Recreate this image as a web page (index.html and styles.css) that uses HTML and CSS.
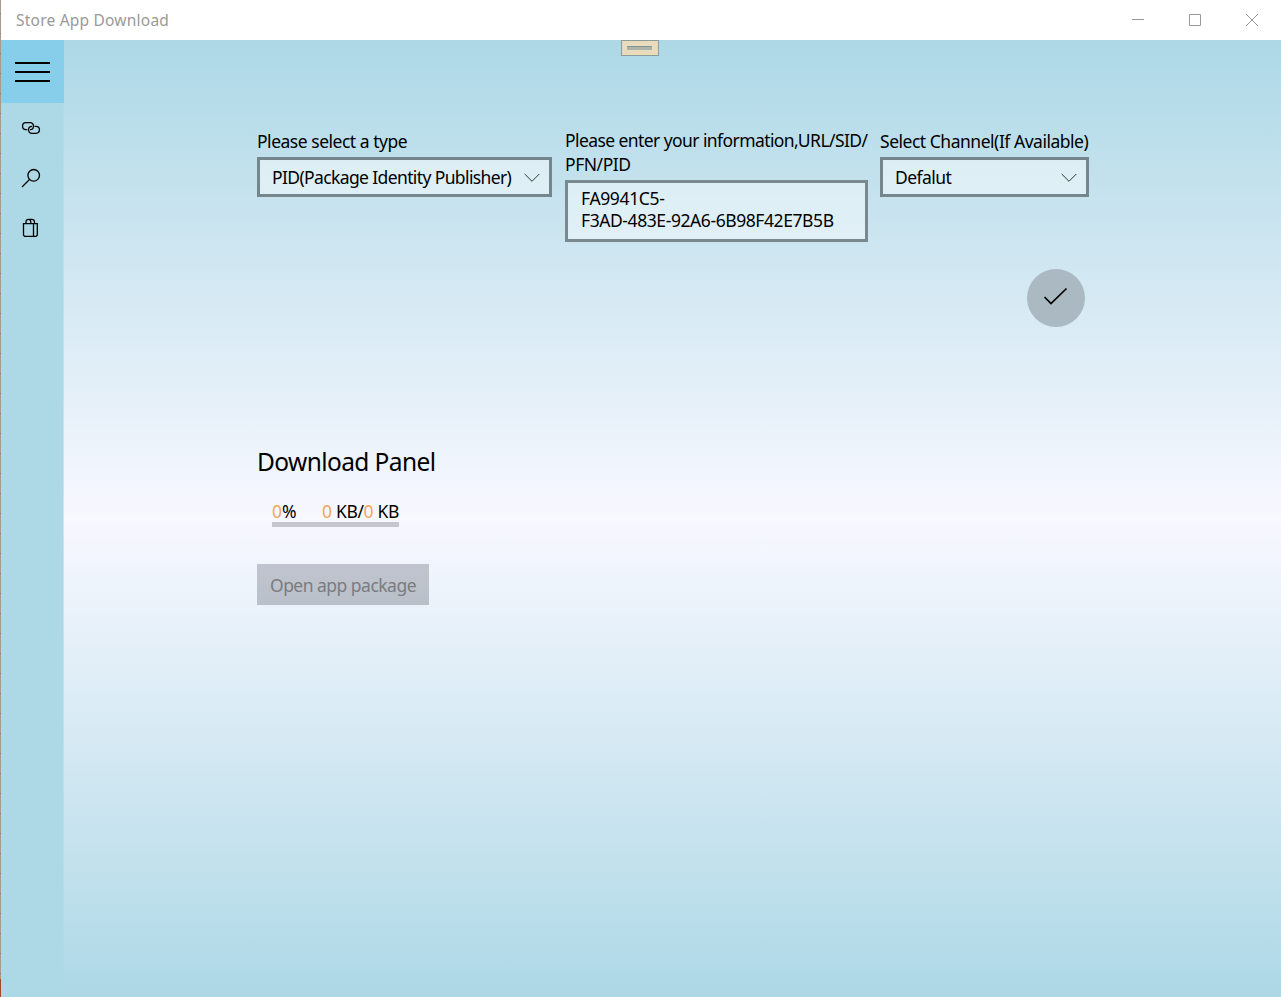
FILE: index.html
```html
<!DOCTYPE html>
<html lang="en">
<head>
<meta charset="utf-8">
<title>Store App Download</title>
<link rel="stylesheet" href="styles.css">
</head>
<body>
<div class="window">
  <header class="titlebar">
    <span class="title">Store App Download</span>
    <div class="controls">
      <svg width="57" height="40" viewBox="0 0 57 40"><path d="M22 19.500h12"/></svg>
      <svg width="57" height="40" viewBox="0 0 57 40"><path d="M22.500 14.500h11v11h-11z"/></svg>
      <svg width="57" height="40" viewBox="0 0 57 40"><path d="M22 14l12 12M34 14l-12 12"/></svg>
    </div>
  </header>
  <div class="app">
    <nav class="sidebar">
      <button class="menu" aria-label="Menu"><i></i><i></i><i></i></button>
      <a class="item"><svg width="20" height="20" viewBox="0 0 20 20"><path d="M6.300 11.600H5a3.400 3.400 0 0 1 0-6.900h4.200c4.400 0 4.400 6.900-.2 6.900M13.500 8.400h1.500a3.400 3.400 0 0 1 0 6.900h-4.200c-4.400 0-4.400-6.900.2-6.900"/></svg></a>
      <a class="item"><svg width="20" height="20" viewBox="0 0 20 20"><circle cx="12.700" cy="7.300" r="5.800"/><path d="M8.500 11.500L1 19"/></svg></a>
      <a class="item"><svg width="20" height="20" viewBox="0 0 20 20"><path d="M2.500 5.700h13.800v11.500l-1.200 1.200H3.700l-1.200-1.200zM12.500 5.700v12.700M5 5.700V4Q5 1.300 7.400 1.300T9.800 4V5.700M8.400 1.300h2.400Q13.500 1.300 13.500 4V5.700"/></svg></a>
    </nav>
    <main class="content">
      <div class="handle"><span></span></div>
      <section class="form">
        <div class="field">
          <label class="label t1">Please select a type</label>
          <div class="select"><span class="t2">PID(Package Identity Publisher)</span><svg width="16" height="10" viewBox="0 0 16 10"><path d="M.7 1l7.300 7.300L15.300 1"/></svg></div>
        </div>
        <div class="field">
          <label class="label double"><span class="t3">Please enter your information,URL/SID/</span><br><span class="t4">PFN/PID</span></label>
          <div class="textbox"><span class="t5">FA9941C5-</span><br><span class="t6">F3AD-483E-92A6-6B98F42E7B5B</span></div>
        </div>
        <div class="field channel">
          <label class="label t7">Select Channel(If Available)</label>
          <div class="select"><span class="t8">Defalut</span><svg width="16" height="10" viewBox="0 0 16 10"><path d="M.7 1l7.300 7.300L15.300 1"/></svg></div>
        </div>
      </section>
      <div class="actions"><button class="confirm" aria-label="Confirm"><svg width="58" height="58" viewBox="0 0 58 58"><circle cx="29" cy="29" r="29"/><path d="M17.500 28l6.500 6.500L39.500 19.500"/></svg></button></div>
      <section class="download">
        <h1>Download Panel</h1>
        <div class="progress">
          <div class="numbers"><span class="percent"><b>0</b>%</span><span><b>0</b> KB/<b>0</b> KB</span></div>
          <div class="bar"></div>
        </div>
        <button class="open">Open app package</button>
      </section>
    </main>
  </div>
</div>
</body>
</html>
```
FILE: styles.css
```css
* { box-sizing: border-box; }
body { margin: 0; font: 17.5px/24px "Noto Sans", "Open Sans", sans-serif; color: #000; overflow: hidden; }
button { border: 0; padding: 0; font: inherit; }
svg { display: block; fill: none; stroke: #000; flex: none; }
.window { height: 997px; padding-left: 1px; display: flex; flex-direction: column; background: linear-gradient(transparent 979px, #a04a2c 979px), repeating-linear-gradient(#a99b8b 0 13px, #7d7f82 13px 14px, #a99b8b 14px 20px); }
.titlebar { height: 40px; flex: none; display: flex; justify-content: space-between; align-items: center; background: #fff; padding-left: 15px; }
.title { color: #999; font-size: 15.5px; letter-spacing: .22px; white-space: nowrap; }
.controls { display: flex; }
.controls svg { stroke: #999; }
.app { flex: 1; display: flex; background: linear-gradient(#add8e6, #f8f8ff 50%, #add8e6); }
.sidebar { width: 63px; background: linear-gradient(90deg, #add8e6 62px, rgba(173,216,230,.6) 62px); }
.menu { width: 63px; height: 63px; background: #87ceeb; display: flex; flex-direction: column; align-items: center; justify-content: center; gap: 7px; padding-top: 1px; }
.menu i { width: 35px; height: 2px; background: #000; }
.item { height: 50px; display: flex; align-items: center; padding-left: 20px; }
.item svg { stroke-width: 1.3; }
.content { flex: 1; position: relative; padding: 90px 0 0 193px; }
.handle { position: absolute; left: 557px; top: 0; width: 38px; height: 16px; border: 1px solid #8c9c98; background: #e8dcbc; padding: 5px 0 0 5px; }
.handle span { display: block; width: 25px; height: 4px; border-top: 1px solid #84969a; background: #adb3a9; }
.form { display: grid; grid-template-columns: 295px 303px 209px; column-gap: 13px; width: 832px; height: 112px; align-items: start; }
.channel { margin-left: -1px; width: 209px; }
.label { display: block; white-space: nowrap; height: 28px; margin-top: -1px; }
.double { height: 52px; margin-top: -2px; }
.select { height: 40px; border: 3px solid #75878d; background: rgba(255,255,255,.45); display: flex; align-items: center; justify-content: space-between; padding: 0 8px 0 12px; white-space: nowrap; }
.select svg { stroke: #333; margin: 1px 1px 0 0; }
.textbox { height: 62px; border: 3px solid #78898f; background: rgba(255,255,255,.42); padding: 4px 0 0 13px; line-height: 22px; white-space: nowrap; }
.t1 { letter-spacing: -.48px; }
.t2 { letter-spacing: -.62px; }
.t3 { letter-spacing: -.58px; }
.t4 { letter-spacing: -.45px; }
.t5 { letter-spacing: -.35px; }
.t6 { letter-spacing: -.42px; }
.t7 { letter-spacing: -.48px; }
.t8 { letter-spacing: -.55px; }
.actions { width: 828.4px; margin-top: 27.4px; display: flex; justify-content: flex-end; }
.confirm { width: 58px; height: 58px; background: none; }
.confirm svg { stroke-width: 1.7; }
.confirm circle { fill: #aab9c2; stroke: none; }
h1 { margin: 117.6px 0 0; font-size: 24.5px; line-height: 34px; font-weight: 400; letter-spacing: -.6px; }
.progress { width: 127px; margin: 20px 0 0 15px; }
.numbers { display: flex; justify-content: space-between; white-space: nowrap; letter-spacing: -.35px; }
.percent { letter-spacing: 0; }
.numbers b { font-weight: 400; color: #f4a460; }
.bar { height: 5px; background: #c6c6ce; margin-top: -1px; }
.open { display: block; margin-top: 37px; width: 172px; height: 41px; background: linear-gradient(#c1c4ce, #b9c0c9); color: #7a7c80; padding-top: 1px; letter-spacing: -.52px; white-space: nowrap; }
```
